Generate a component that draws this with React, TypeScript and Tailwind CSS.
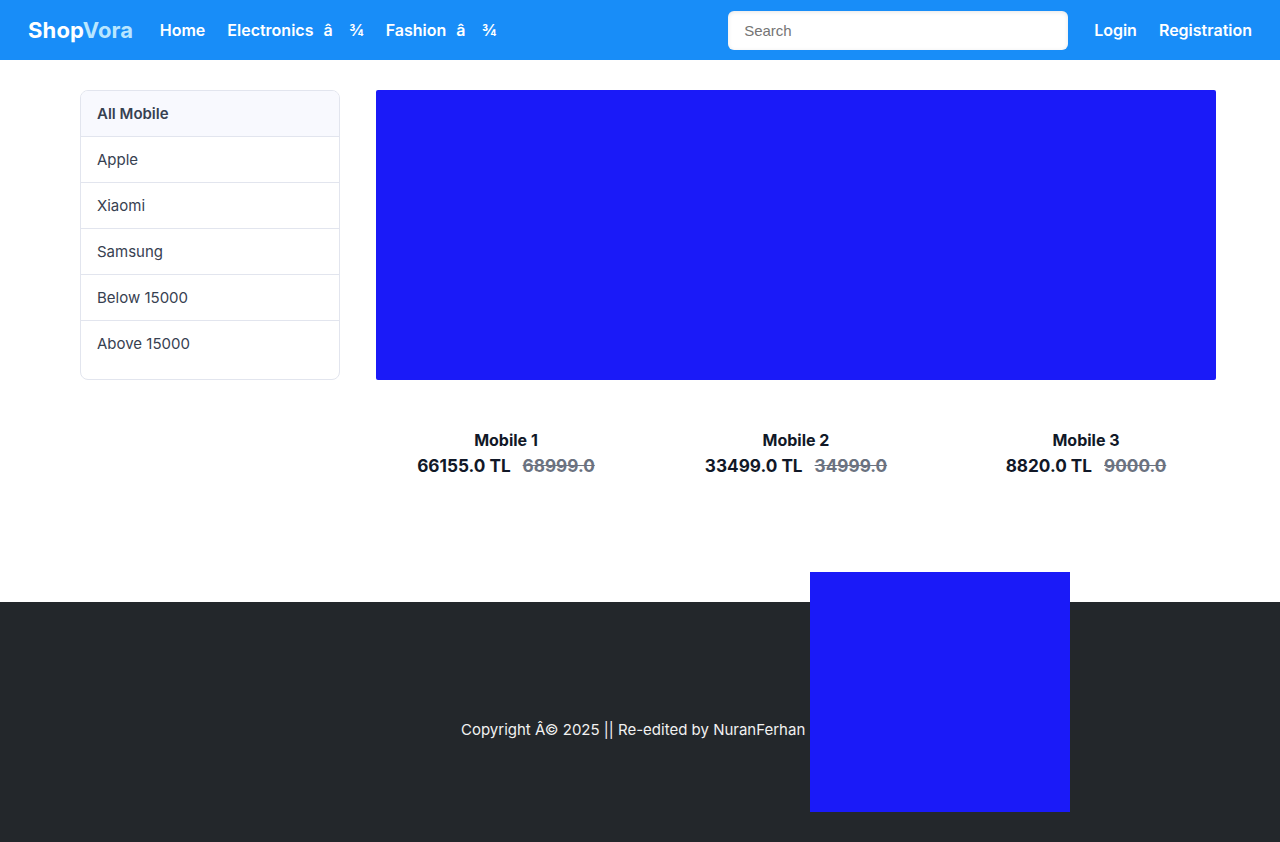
import React from "react";

const categories = ["Apple", "Xiaomi", "Samsung", "Below 15000", "Above 15000"];
const products = [
  { name: "Mobile 1", price: "66155.0 TL", old: "68999.0" },
  { name: "Mobile 2", price: "33499.0 TL", old: "34999.0" },
  { name: "Mobile 3", price: "8820.0 TL", old: "9000.0" },
];

export default function App() {
  return (
    <div className="flex min-h-[842px] flex-col bg-white font-['Inter',sans-serif] text-[15px] text-[#374151] antialiased">
      <header className="flex h-[60px] items-center bg-[#188df8] px-7 text-base font-semibold text-white">
        <a className="mr-[26.5px] text-[22px] font-bold tracking-[0.14px]">
          Shop<span className="text-[#b8e6ff]">Vora</span>
        </a>
        <nav className="flex items-center gap-[22px] whitespace-pre">
          <a>Home</a>
          <a className="flex">Electronics<span className="ml-[10px]">â</span><span className="ml-[16.5px]">¾</span></a>
          <a className="flex">Fashion<span className="ml-[10px]">â</span><span className="ml-[16.5px]">¾</span></a>
        </nav>
        <input
          placeholder="Search"
          className="ml-auto h-[39px] w-[340px] rounded-[6px] bg-white px-4 font-['Liberation_Sans',Arial,sans-serif] text-[15px] font-normal text-[#222] shadow-[inset_0_1px_4px_rgba(0,0,0,0.1)] placeholder:text-[#757575]"
        />
        <a className="ml-[26px]">Login</a>
        <a className="ml-[22px]">Registration</a>
      </header>
      <main className="flex h-[542px] gap-9 pl-20 pr-16 pt-[30px]">
        <aside className="h-[290px] w-[260px] overflow-hidden rounded-[8px] border border-[#e2e5ee]">
          <div className="flex h-[46px] items-center border-b border-[#e2e5ee] bg-[#f8f9fe] px-4 pt-px font-semibold">All Mobile</div>
          {categories.map((c) => (
            <div key={c} className="flex h-[46px] items-center border-b border-[#e2e5ee] px-4 pt-px last:border-b-0 last:pt-0">{c}</div>
          ))}
        </aside>
        <section className="w-[840px]">
          <div className="h-[290px] rounded-[2px] bg-[#1a1af8]" />
          <div className="mt-[48px] grid grid-cols-3 gap-[30px] text-center text-[#111827]">
            {products.map((p) => (
              <div key={p.name}>
                <h3 className="text-base leading-6 font-bold">{p.name}</h3>
                <p className="mt-px text-[17.2px] leading-[26px] font-bold">
                  {p.price}
                  <del className="ml-3 text-[#6b7280]">{p.old}</del>
                </p>
              </div>
            ))}
          </div>
        </section>
      </main>
      <footer className="flex h-[240px] justify-center bg-[#23272b] text-[#f1f1f1]">
        <p className="mr-[5px] ml-[251px] w-[344px] pt-[117px] whitespace-nowrap">Copyright Â© 2025 || Re-edited by NuranFerhan</p>
        <div className="-mt-[30px] h-[240px] w-[260px] bg-[#1a1af8]" />
      </footer>
    </div>
  );
}
